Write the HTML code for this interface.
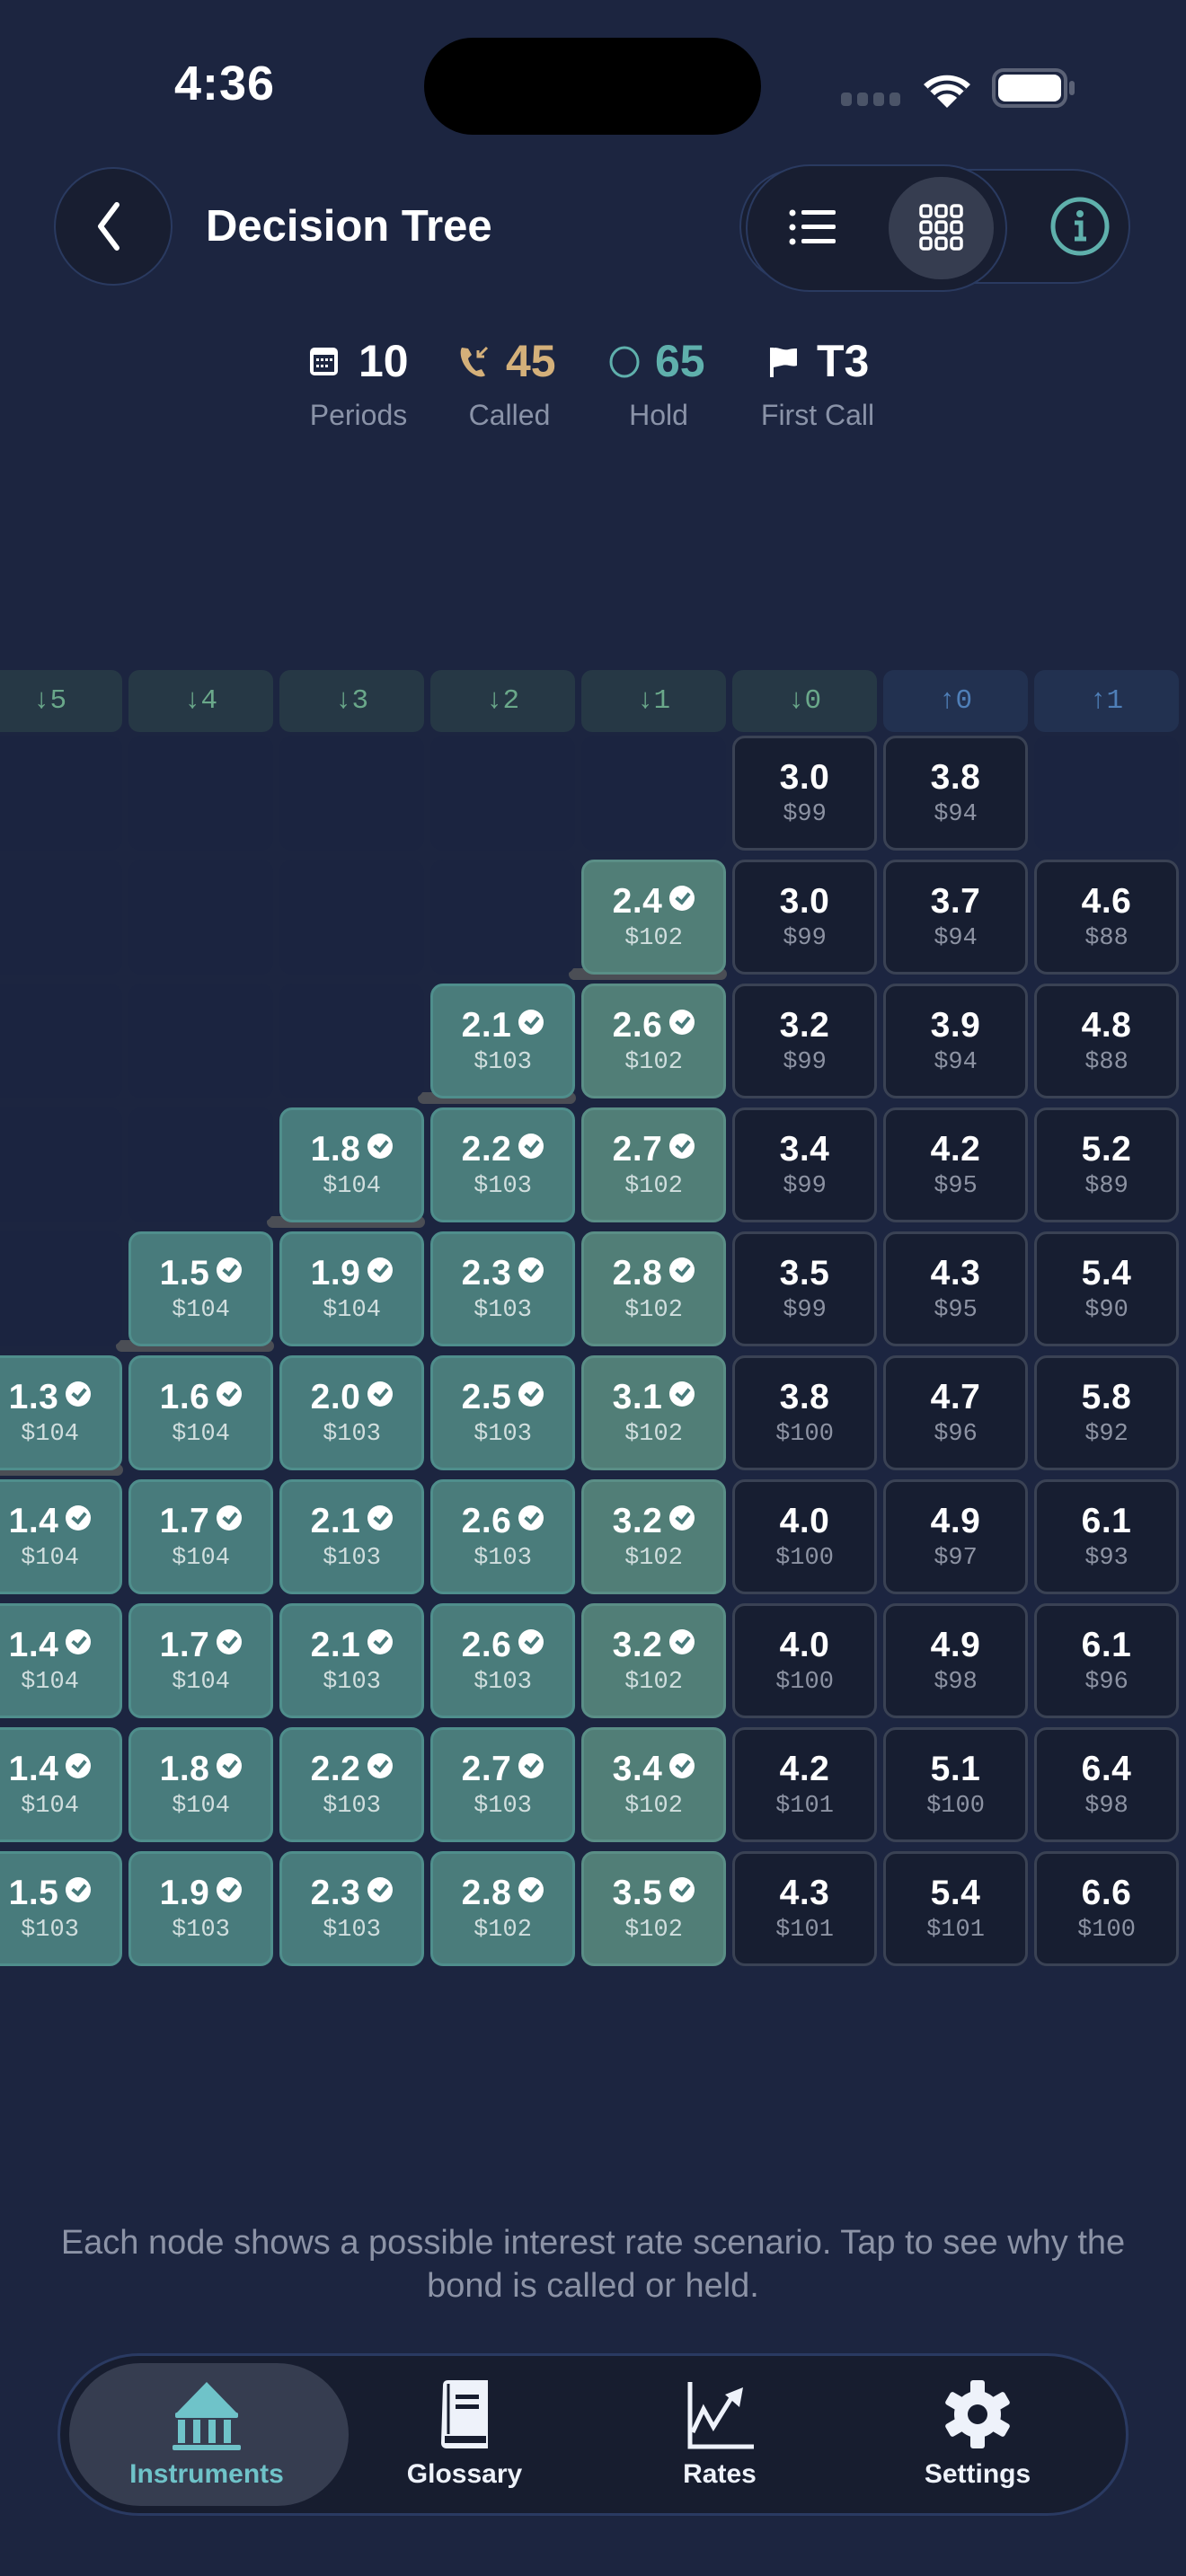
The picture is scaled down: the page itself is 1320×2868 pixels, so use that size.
<!DOCTYPE html>
<html><head><meta charset="utf-8"><style>
*{margin:0;padding:0;box-sizing:border-box}
body{width:1320px;height:2868px;background:#1c2540;position:relative;overflow:hidden;font-family:"Liberation Sans",sans-serif;color:#fff}
.a{position:absolute}
.grid{position:absolute;left:-25px;top:819px;display:grid;grid-template-columns:repeat(8,161px);grid-auto-rows:128px;column-gap:7px;row-gap:10px}
.c{border-radius:14px;text-align:center;position:relative;z-index:2}
.e{background:#1b2440}
.d{background:#171e31;border:3px solid #3a4254}
.t{background:#487b7c;border:3px solid #4f8e8c}
.t.k1{background:#517e77;border-color:#5a8e86}
.t.k2{background:#4a7c7b}
.c p{font-weight:bold;font-size:39px;line-height:40px;margin-top:24px;letter-spacing:0.5px}
.c s{text-decoration:none;display:block;font-family:"Liberation Mono",monospace;font-size:27px;line-height:30px;margin-top:6px}
.t s{color:#d0dede}.d s{color:#8d93a3}
.c i{display:inline-block;width:28px;height:28px;border-radius:50%;background:#fff;margin-left:8px;vertical-align:2px;position:relative}
.c i:after{content:"";position:absolute;left:10px;top:5px;width:6px;height:11px;border:solid #487b7c;border-width:0 4px 4px 0;transform:rotate(40deg)}
.hd{position:absolute;top:746px;width:161px;height:69px;border-radius:12px;font-family:"Liberation Mono",monospace;font-size:31px;line-height:69px;text-align:center}
.dn{background:#263845;color:#6aa88a}.up{background:#223150;color:#4f7fb8}
.bar{position:absolute;height:13px;width:176px;background:#4b4e55;border-radius:7px;z-index:1}
.num{position:absolute;top:374px;font-size:50px;font-weight:bold;line-height:56px}
.lab{position:absolute;top:444px;font-size:32px;color:#8a93a8;transform:translateX(-50%);white-space:nowrap}
.tab{position:absolute;top:2738px;font-size:30px;font-weight:bold;transform:translateX(-50%);color:#eef2fa}
</style></head><body>
<div class="a" style="left:194px;top:62px;font-size:54px;font-weight:bold;letter-spacing:1px">4:36</div>
<div class="a" style="left:472px;top:42px;width:375px;height:108px;background:#000;border-radius:54px"></div>
<div class="a" style="left:936px;top:103px;width:12px;height:15px;background:#4b5468;border-radius:4px"></div>
<div class="a" style="left:954px;top:103px;width:12px;height:15px;background:#4b5468;border-radius:4px"></div>
<div class="a" style="left:972px;top:103px;width:12px;height:15px;background:#4b5468;border-radius:4px"></div>
<div class="a" style="left:990px;top:103px;width:12px;height:15px;background:#4b5468;border-radius:4px"></div>
<svg class="a" style="left:1024px;top:74px" width="60" height="48" viewBox="0 0 60 48"><path d="M30 46 L4 20 A38 38 0 0 1 56 20 Z" fill="#fff"/><path d="M10 26 A28 28 0 0 1 50 26" stroke="#1c2540" stroke-width="4" fill="none"/><path d="M17 34 A18 18 0 0 1 43 34" stroke="#1c2540" stroke-width="4" fill="none"/></svg>
<div class="a" style="left:1104px;top:76px;width:84px;height:44px;border:4px solid #5b6276;border-radius:13px"></div>
<div class="a" style="left:1111px;top:83px;width:70px;height:30px;background:#fff;border-radius:8px"></div>
<div class="a" style="left:1190px;top:90px;width:6px;height:16px;background:#5b6276;border-radius:3px"></div>

<div class="a" style="left:60px;top:186px;width:132px;height:132px;border-radius:50%;background:#181e31;border:2px solid #2a3a60"></div>
<svg class="a" style="left:100px;top:222px" width="40" height="60" viewBox="0 0 40 60"><path d="M30 6 L12 30 L30 54" stroke="#fff" stroke-width="6" fill="none" stroke-linecap="round" stroke-linejoin="round"/></svg>
<div class="a" style="left:229px;top:224px;font-size:49px;font-weight:bold">Decision Tree</div>

<div class="a" style="left:823px;top:188px;width:435px;height:128px;border-radius:64px;background:#181e31;border:2px solid #2a3a60"></div>
<div class="a" style="left:830px;top:183px;width:291px;height:142px;border-radius:71px;background:#181e31;border:2px solid #2a3a60"></div>
<div class="a" style="left:989px;top:197px;width:117px;height:114px;border-radius:57px;background:#363d50"></div>
<svg class="a" style="left:878px;top:232px" width="56" height="42" viewBox="0 0 56 42"><g fill="#fff"><circle cx="4" cy="5" r="3.5"/><circle cx="4" cy="21" r="3.5"/><circle cx="4" cy="37" r="3.5"/><rect x="14" y="2" width="38" height="5" rx="2"/><rect x="14" y="18" width="38" height="5" rx="2"/><rect x="14" y="34" width="38" height="5" rx="2"/></g></svg>
<svg class="a" style="left:1023px;top:227px" width="50" height="52" viewBox="0 0 50 52"><g fill="none" stroke="#fff" stroke-width="3.5"><rect x="2" y="2" width="11" height="12" rx="3"/><rect x="19" y="2" width="11" height="12" rx="3"/><rect x="36" y="2" width="11" height="12" rx="3"/><rect x="2" y="20" width="11" height="12" rx="3"/><rect x="19" y="20" width="11" height="12" rx="3"/><rect x="36" y="20" width="11" height="12" rx="3"/><rect x="2" y="38" width="11" height="12" rx="3"/><rect x="19" y="38" width="11" height="12" rx="3"/><rect x="36" y="38" width="11" height="12" rx="3"/></g></svg>
<svg class="a" style="left:1168px;top:218px" width="68" height="68" viewBox="0 0 68 68"><circle cx="34" cy="34" r="30" stroke="#5fb0ac" stroke-width="5" fill="none"/><circle cx="34" cy="20" r="4" fill="#5fb0ac"/><path d="M28 30 H35 V48 M28 48 H41" stroke="#5fb0ac" stroke-width="5" fill="none"/></svg>

<svg class="a" style="left:344px;top:386px" width="33" height="33" viewBox="0 0 33 33"><rect x="1" y="1" width="31" height="31" rx="5" fill="#fff"/><rect x="5" y="9" width="23" height="19" fill="#1c2540"/><g fill="#fff"><rect x="8" y="13" width="3" height="3"/><rect x="13" y="13" width="3" height="3"/><rect x="18" y="13" width="3" height="3"/><rect x="23" y="13" width="3" height="3"/><rect x="8" y="20" width="3" height="3"/><rect x="13" y="20" width="3" height="3"/><rect x="18" y="20" width="3" height="3"/></g></svg>
<div class="num" style="left:399px">10</div>
<svg class="a" style="left:510px;top:384px" width="36" height="38" viewBox="0 0 36 38"><path d="M4 3 C1 8 3 20 12 29 C19 35 26 37 30 34 L26 27 L20 29 C15 25 12 20 11 15 L15 11 L11 4 Z" fill="#d4b07a"/><path d="M32 3 L22 13 M22 6 V13 H29" stroke="#d4b07a" stroke-width="3" fill="none"/></svg>
<div class="num" style="left:563px;color:#d4b07a">45</div>
<svg class="a" style="left:676px;top:384px" width="38" height="38" viewBox="0 0 38 38"><ellipse cx="19" cy="19" rx="15" ry="16" stroke="#5fb0ac" stroke-width="3" fill="none"/></svg>
<div class="num" style="left:729px;color:#5fb0ac">65</div>
<svg class="a" style="left:856px;top:385px" width="34" height="36" viewBox="0 0 34 36"><path d="M3 2 V35" stroke="#fff" stroke-width="4"/><path d="M3 3 C10 0 14 6 22 4 C26 3 29 3 31 3 V22 C25 24 20 20 14 22 C9 23 6 24 3 24 Z" fill="#fff"/></svg>
<div class="num" style="left:909px">T3</div>
<div class="lab" style="left:399px">Periods</div>
<div class="lab" style="left:567px">Called</div>
<div class="lab" style="left:733px">Hold</div>
<div class="lab" style="left:910px">First Call</div>

<div class="hd dn" style="left:-25px">↓5</div>
<div class="hd dn" style="left:143px">↓4</div>
<div class="hd dn" style="left:311px">↓3</div>
<div class="hd dn" style="left:479px">↓2</div>
<div class="hd dn" style="left:647px">↓1</div>
<div class="hd dn" style="left:815px">↓0</div>
<div class="hd up" style="left:983px">↑0</div>
<div class="hd up" style="left:1151px">↑1</div>

<div class="bar" style="left:633px;top:1078px"></div>
<div class="bar" style="left:465px;top:1216px"></div>
<div class="bar" style="left:297px;top:1354px"></div>
<div class="bar" style="left:129px;top:1492px"></div>
<div class="bar" style="left:-39px;top:1630px"></div>

<div class="grid">
<div class="c e"></div><div class="c e"></div><div class="c e"></div><div class="c e"></div><div class="c e"></div><div class="c d"><p>3.0</p><s>$99</s></div><div class="c d"><p>3.8</p><s>$94</s></div><div class="c e"></div>

<div class="c e"></div><div class="c e"></div><div class="c e"></div><div class="c e"></div><div class="c t k1"><p>2.4<i></i></p><s>$102</s></div><div class="c d"><p>3.0</p><s>$99</s></div><div class="c d"><p>3.7</p><s>$94</s></div><div class="c d"><p>4.6</p><s>$88</s></div>

<div class="c e"></div><div class="c e"></div><div class="c e"></div><div class="c t k2"><p>2.1<i></i></p><s>$103</s></div><div class="c t k1"><p>2.6<i></i></p><s>$102</s></div><div class="c d"><p>3.2</p><s>$99</s></div><div class="c d"><p>3.9</p><s>$94</s></div><div class="c d"><p>4.8</p><s>$88</s></div>

<div class="c e"></div><div class="c e"></div><div class="c t"><p>1.8<i></i></p><s>$104</s></div><div class="c t k2"><p>2.2<i></i></p><s>$103</s></div><div class="c t k1"><p>2.7<i></i></p><s>$102</s></div><div class="c d"><p>3.4</p><s>$99</s></div><div class="c d"><p>4.2</p><s>$95</s></div><div class="c d"><p>5.2</p><s>$89</s></div>

<div class="c e"></div><div class="c t"><p>1.5<i></i></p><s>$104</s></div><div class="c t"><p>1.9<i></i></p><s>$104</s></div><div class="c t k2"><p>2.3<i></i></p><s>$103</s></div><div class="c t k1"><p>2.8<i></i></p><s>$102</s></div><div class="c d"><p>3.5</p><s>$99</s></div><div class="c d"><p>4.3</p><s>$95</s></div><div class="c d"><p>5.4</p><s>$90</s></div>

<div class="c t"><p>1.3<i></i></p><s>$104</s></div><div class="c t"><p>1.6<i></i></p><s>$104</s></div><div class="c t"><p>2.0<i></i></p><s>$103</s></div><div class="c t k2"><p>2.5<i></i></p><s>$103</s></div><div class="c t k1"><p>3.1<i></i></p><s>$102</s></div><div class="c d"><p>3.8</p><s>$100</s></div><div class="c d"><p>4.7</p><s>$96</s></div><div class="c d"><p>5.8</p><s>$92</s></div>

<div class="c t"><p>1.4<i></i></p><s>$104</s></div><div class="c t"><p>1.7<i></i></p><s>$104</s></div><div class="c t"><p>2.1<i></i></p><s>$103</s></div><div class="c t k2"><p>2.6<i></i></p><s>$103</s></div><div class="c t k1"><p>3.2<i></i></p><s>$102</s></div><div class="c d"><p>4.0</p><s>$100</s></div><div class="c d"><p>4.9</p><s>$97</s></div><div class="c d"><p>6.1</p><s>$93</s></div>

<div class="c t"><p>1.4<i></i></p><s>$104</s></div><div class="c t"><p>1.7<i></i></p><s>$104</s></div><div class="c t"><p>2.1<i></i></p><s>$103</s></div><div class="c t k2"><p>2.6<i></i></p><s>$103</s></div><div class="c t k1"><p>3.2<i></i></p><s>$102</s></div><div class="c d"><p>4.0</p><s>$100</s></div><div class="c d"><p>4.9</p><s>$98</s></div><div class="c d"><p>6.1</p><s>$96</s></div>

<div class="c t"><p>1.4<i></i></p><s>$104</s></div><div class="c t"><p>1.8<i></i></p><s>$104</s></div><div class="c t"><p>2.2<i></i></p><s>$103</s></div><div class="c t k2"><p>2.7<i></i></p><s>$103</s></div><div class="c t k1"><p>3.4<i></i></p><s>$102</s></div><div class="c d"><p>4.2</p><s>$101</s></div><div class="c d"><p>5.1</p><s>$100</s></div><div class="c d"><p>6.4</p><s>$98</s></div>

<div class="c t"><p>1.5<i></i></p><s>$103</s></div><div class="c t"><p>1.9<i></i></p><s>$103</s></div><div class="c t"><p>2.3<i></i></p><s>$103</s></div><div class="c t k2"><p>2.8<i></i></p><s>$102</s></div><div class="c t k1"><p>3.5<i></i></p><s>$102</s></div><div class="c d"><p>4.3</p><s>$101</s></div><div class="c d"><p>5.4</p><s>$101</s></div><div class="c d"><p>6.6</p><s>$100</s></div>
</div>

<div class="a" style="left:0px;top:2473px;width:1320px;text-align:center;font-size:38px;line-height:48px;color:#8c93a6;white-space:nowrap">Each node shows a possible interest rate scenario. Tap to see why the<br>bond is called or held.</div>

<div class="a" style="left:64px;top:2620px;width:1192px;height:181px;border-radius:91px;background:#171d2f;border:3px solid #2a3a62"></div>
<div class="a" style="left:77px;top:2631px;width:311px;height:159px;border-radius:80px;background:#363d50"></div>
<svg class="a" style="left:191px;top:2650px" width="78" height="78" viewBox="0 0 78 78"><g fill="#6fc3c9"><path d="M39 2 L74 38 H4 Z"/><rect x="4" y="36" width="70" height="6" rx="2"/><rect x="7" y="44" width="8" height="26"/><rect x="24" y="44" width="8" height="26"/><rect x="41" y="44" width="8" height="26"/><rect x="58" y="44" width="8" height="26"/><rect x="1" y="72" width="76" height="6" rx="2"/></g></svg>
<svg class="a" style="left:489px;top:2650px" width="58" height="78" viewBox="0 0 58 78"><path d="M4 6 C4 2 6 0 10 0 H54 V76 H8 C5 76 2 74 2 70 Z" fill="#eef2fa"/><path d="M10 4 V60" stroke="#171d2f" stroke-width="3"/><rect x="18" y="16" width="26" height="5" fill="#171d2f"/><rect x="18" y="27" width="26" height="5" fill="#171d2f"/><rect x="6" y="62" width="46" height="8" fill="#171d2f"/></svg>
<svg class="a" style="left:765px;top:2650px" width="76" height="78" viewBox="0 0 76 78"><path d="M3 2 V74 H74" stroke="#eef2fa" stroke-width="5" fill="none"/><path d="M6 58 L18 32 L29 52 L50 18" stroke="#eef2fa" stroke-width="5" fill="none"/><path d="M42 16 L62 8 L58 30 Z" fill="#eef2fa"/></svg>
<svg class="a" style="left:1050px;top:2648px" width="76" height="80" viewBox="0 0 76 80"><g fill="#eef2fa"><circle cx="38" cy="40" r="26"/><rect x="30" y="2" width="16" height="76" rx="3"/><rect x="30" y="2" width="16" height="76" rx="3" transform="rotate(60 38 40)"/><rect x="30" y="2" width="16" height="76" rx="3" transform="rotate(-60 38 40)"/></g><circle cx="38" cy="40" r="11" fill="#171d2f"/></svg>
<div class="tab" style="left:230px;color:#6fc3c9">Instruments</div>
<div class="tab" style="left:517px">Glossary</div>
<div class="tab" style="left:801px">Rates</div>
<div class="tab" style="left:1088px">Settings</div>
</body></html>
